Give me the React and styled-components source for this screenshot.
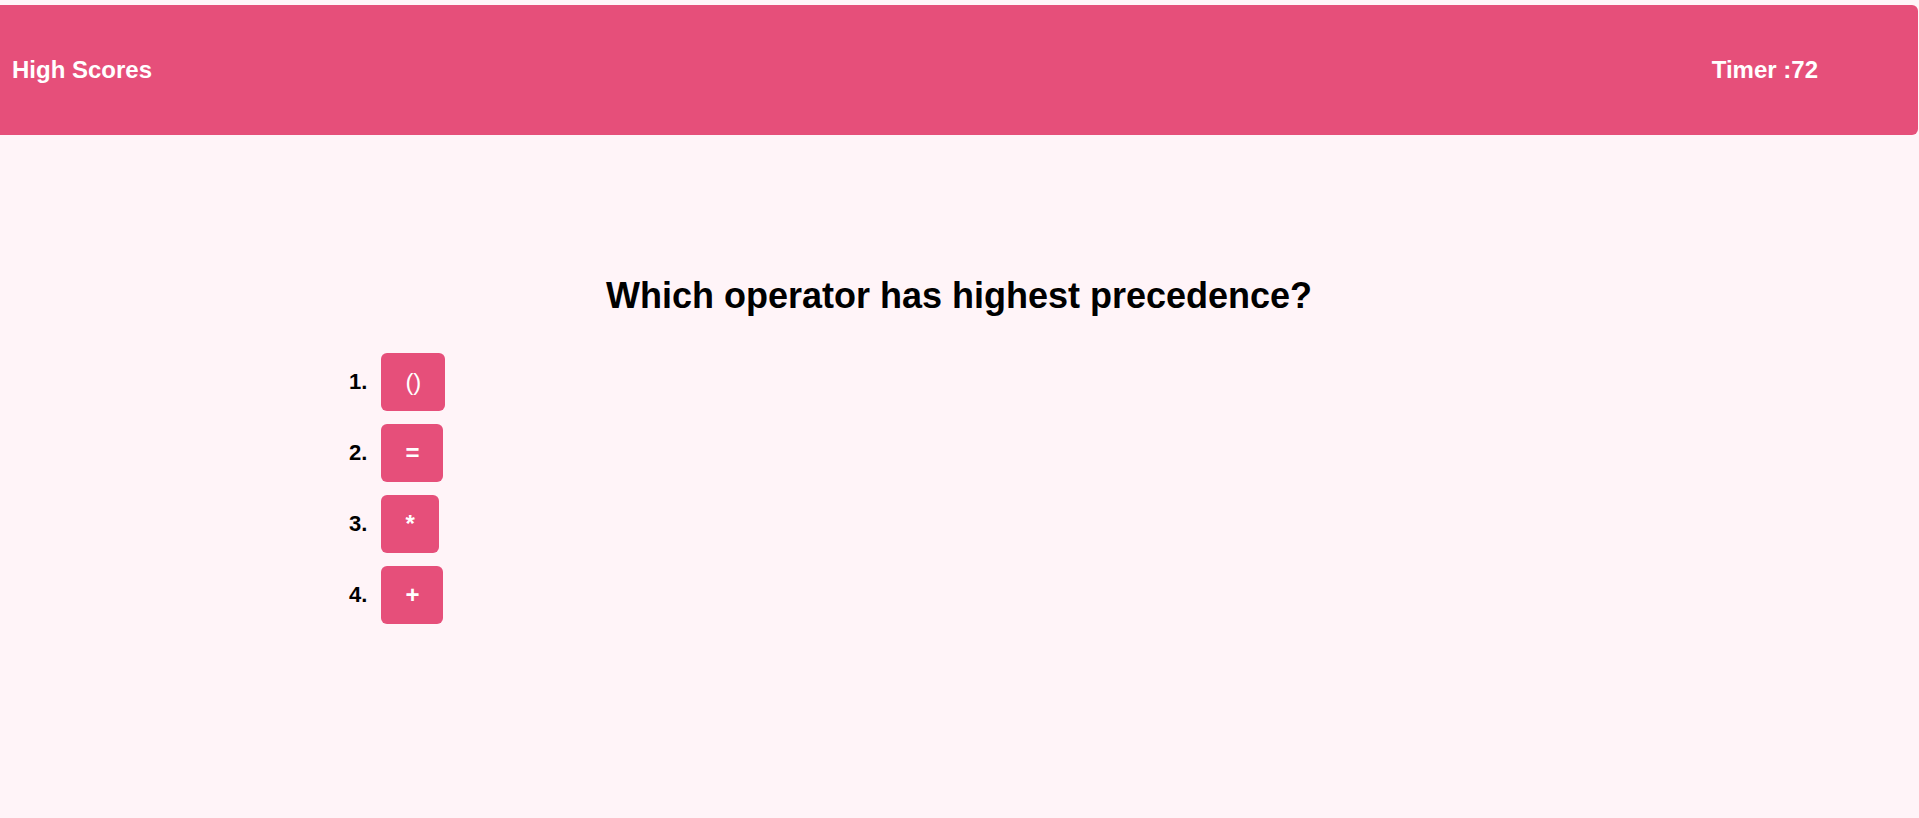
import React from 'react'
import styled, { createGlobalStyle } from 'styled-components';

const GlobalStyle = createGlobalStyle`
  body {
    margin: 0;
    background: #fff4f8;
    font-family: "Liberation Sans", Arial, sans-serif;
  }
`;

const Page = styled.div`
  min-height: 818px;
  padding: 5px 1px 0 0;
  box-sizing: border-box;
  background: #fff4f8;
`;

const Header = styled.header`
  height: 130px;
  background: #e64f7a;
  border-radius: 0 6px 6px 0;
  display: flex;
  align-items: center;
  justify-content: space-between;
  padding: 0 100px 0 12px;
  color: #ffffff;
  font-size: 24px;
  font-weight: bold;
`;

const Main = styled.main`
  padding-top: 140px;
  display: flex;
  flex-direction: column;
`;

const Question = styled.h1`
  margin: 0;
  text-align: center;
  font-size: 36px;
  font-weight: bold;
  color: #000;
`;

const Choices = styled.ol`
  list-style: none;
  margin: 36px 0 0;
  padding: 0 0 0 349px;
  display: flex;
  flex-direction: column;
  gap: 13px;
`;

const Choice = styled.li`
  display: flex;
  align-items: center;
  gap: 14px;
`;

const Num = styled.span`
  font-size: 22px;
  font-weight: bold;
  color: #000;
`;

const Answer = styled.button`
  height: 58px;
  padding: 0 24px;
  border: none;
  border-radius: 6px;
  background: #e64f7a;
  color: #ffffff;
  font-family: "Liberation Sans", Arial, sans-serif;
  font-size: 24px;
  font-weight: ${({ thin }) => (thin ? 'normal' : 'bold')};
  cursor: pointer;
`;

const choices = [
  { text: '()', thin: true },
  { text: '=' },
  { text: '*' },
  { text: '+' },
];

const App = () => {
  return (
    <Page>
      <GlobalStyle />
      <Header>
        <span>High Scores</span>
        <span>Timer :72</span>
      </Header>
      <Main>
        <Question>Which operator has highest precedence?</Question>
        <Choices>
          {choices.map((c, i) => (
            <Choice key={i}>
              <Num>{i + 1}.</Num>
              <Answer thin={c.thin}>{c.text}</Answer>
            </Choice>
          ))}
        </Choices>
      </Main>
    </Page>
  )
}

export default App
